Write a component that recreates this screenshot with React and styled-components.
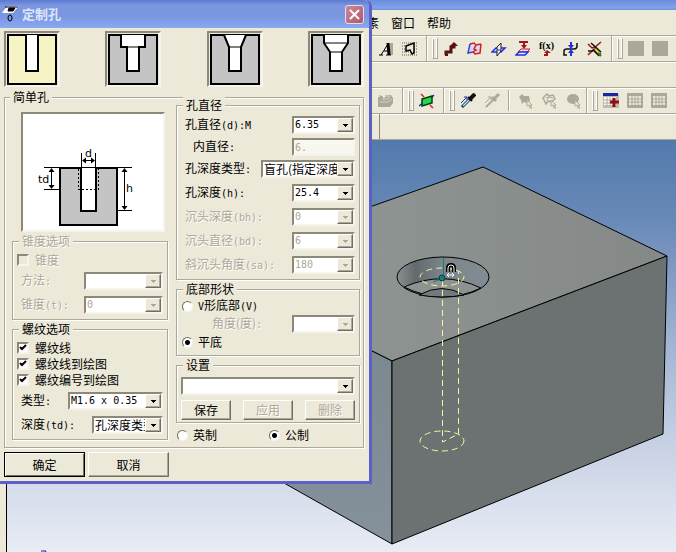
import React, { useState } from 'react'
import styled, { createGlobalStyle, css } from 'styled-components'

function Combo({ id, width, options, cjk, disabled, label }) {
    return (
        <ComboBox $width={width}>
            <select id={id} className={cjk ? 'cjk' : ''} disabled={disabled} aria-label={label}>
                {options.map((option) => <option key={option}>{option}</option>)}
            </select>
            <ComboArrow $disabled={disabled}>
                <svg width='5' height='3' viewBox='0 0 5 3' shapeRendering='crispEdges'>
                    <path d='M0 0h5v1h-1v1h-1v1h-1v-1h-1v-1h-1z' />
                </svg>
            </ComboArrow>
        </ComboBox>
    )
}

function Field({ id, text, latin, children, indent, disabled, height }) {
    return (
        <FieldRow $height={height}>
            <FieldLabel htmlFor={id} $indent={indent} $disabled={disabled}>
                {text}{latin && <span className='latin'>{latin}</span>}
            </FieldLabel>
            {children}
        </FieldRow>
    )
}

function Check({ text, checked, disabled }) {
    const [on, setOn] = useState(checked)
    return (
        <CheckLabel $disabled={disabled}>
            <input type='checkbox' checked={on} disabled={disabled} onChange={(e) => setOn(e.target.checked)} />
            {text}
        </CheckLabel>
    )
}

function Radio({ name, value, current, onPick, children }) {
    return (
        <RadioLabel>
            <input type='radio' name={name} checked={value === current} onChange={() => onPick(value)} />
            <span>{children}</span>
        </RadioLabel>
    )
}

// hole profiles, drawn in a 50 x 51 block
const holes = [
    { name: '简单孔', fill: '#f6f4c4', bore: 'M19 1V37H31V1' },
    { name: '沉头孔', fill: '#c4c4c4', bore: 'M13 1V13H19V37H31V13H37V1', line: 'M19 13H31' },
    { name: '斜沉头孔', fill: '#c4c4c4', bore: 'M14 1L19 13V37H31V13L36 1', line: 'M19 13H31' },
    { name: '复合孔', fill: '#c4c4c4', bore: 'M13 1V9L19 18V37H31V18L37 9V1', line: 'M13 9H37M19 18H31' },
]

function HoleIcon({ hole }) {
    return (
        <svg width='50' height='51' viewBox='0 0 50 51'>
            <rect x='1' y='1' width='48' height='49' fill={hole.fill} stroke='#000' strokeWidth='2' />
            <path d={hole.bore} fill='#fff' stroke='#000' strokeWidth='2' />
            {hole.line && <path d={hole.line} stroke='#000' />}
        </svg>
    )
}

function HoleDrawing() {
    return (
        <svg width='140' height='115' viewBox='23 114 140 115'>
            <path d='M60 168H117V225H60Z' fill='#c4c4c4' stroke='#000' strokeWidth='2' />
            <path d='M81 167V211H96V167' fill='#fff' stroke='#000' strokeWidth='2' />
            <g stroke='#000' fill='none' shapeRendering='crispEdges'>
                <path d='M44 167.500H132M81.500 153V168M95.500 153V168M44 189.500H60M118 210.500H132' />
                <path d='M83 160.500H94M51.500 169V188M124.500 169V209' />
                <path d='M78.500 169V189.500H98.500V169' strokeDasharray='2 2' />
            </g>
            <path d='M82 160.500l4-3v6zM95 160.500l-4-3v6zM51.500 168l-3 4h6zM51.500 189l-3-4h6zM124.500 168l-3 4h6zM124.500 210l-3-4h6z' />
            <text x='85' y='157'>d</text>
            <text x='38' y='183'>td</text>
            <text x='126' y='192'>h</text>
        </svg>
    )
}

const toolIcons = {
    text: (
        <>
            <path d='M12 2H15V14H12Z' fill='#aca899' />
            <path d='M1 14H5M8 14H13M3 14L10 3M6 10H10' stroke='#000' fill='none' />
            <path d='M10 2L11 14' stroke='#000' strokeWidth='3' />
        </>
    ),
    mesh: (
        <>
            <path d='M0 2H16M0 5H16M0 8H16M0 11H16M0 14H16' stroke='#8c8a80' strokeWidth='1.500' strokeDasharray='1 1' />
            <path d='M4 5L12 2V12L10 13L8 9L4 10Z' fill='#ece9d8' stroke='#000' strokeWidth='1.500' />
        </>
    ),
    bend: (
        <>
            <path d='M3 14V11H8V6H11V4' stroke='#581010' strokeWidth='3' fill='none' />
            <path d='M2 12V15H5V13Z' fill='#581010' />
            <path d='M7 5L11 1L15 5Z' fill='#581010' />
        </>
    ),
    surface: (
        <>
            <path d='M3 3L7 2L9 4L14 3L13 12L8 13L6 11L1 12Z' fill='#ded8ee' />
            <path d='M3 3L7 2L9 4L14 3M6 11L8 13L13 12L14 3M9 4L7 8L9 9L6 11' fill='none' stroke='#d02020' strokeWidth='1.500' />
            <path d='M3 3L1 12L6 11' stroke='#3048d0' strokeWidth='1.500' fill='none' />
        </>
    ),
    planes: (
        <>
            <path d='M1 11L5 7H14L10 11Z' fill='#e8ecff' stroke='#2030e0' strokeWidth='1.500' />
            <path d='M6 15V6L10 2V10Z' fill='#f4f2e8' stroke='#202020' />
            <path d='M6 9H10' stroke='#2030e0' />
        </>
    ),
    offset: (
        <>
            <path d='M4 1H13M9 1V5' stroke='#a01818' strokeWidth='2' />
            <path d='M9 8L6 4H12Z' fill='#a01818' />
            <path d='M3 11L6 8H15L12 11Z' fill='#f4dce0' stroke='#c02030' />
            <path d='M1 14L4 11H13L10 14Z' fill='#e8ecff' stroke='#2030e0' strokeWidth='1.500' />
        </>
    ),
    fx: (
        <>
            <path d='M5 14H8V10' stroke='#a01818' strokeWidth='2' fill='none' />
            <path d='M5 12L8 9L12 12Z' fill='#a01818' />
            <text x='0' y='8' fontSize='10' fontWeight='bold' fontFamily='Liberation Serif, serif'>f(x)</text>
        </>
    ),
    spline: (
        <>
            <path d='M4 14H1V10Q1 8 4 8H11Q14 8 14 5V2' stroke='#101010' strokeWidth='1.500' fill='none' />
            <path d='M8 1V4M8 12V15' stroke='#2030e0' strokeWidth='2' />
            <path d='M5 4H11L8 8ZM5 12H11L8 8Z' fill='#2030e0' />
        </>
    ),
    trim: (
        <>
            <path d='M1 3L5 7L8 6L14 1M1 14L7 8' stroke='#901818' strokeWidth='1.500' fill='none' />
            <path d='M4 2L14 11M1 10L6 10' stroke='#101010' strokeWidth='1.500' />
            <path d='M7 8L13 14' stroke='#101010' strokeWidth='4' />
            <path d='M8 8L13 13' stroke='#ecd838' strokeWidth='2' />
            <path d='M11 12L14 15' stroke='#207828' strokeWidth='2' />
        </>
    ),
    blank: <path d='M0 0h16v15h-16z' fill='#aca899' />,
    print: (
        <>
            <path d='M0 4H2L1 2L4 3L6 5L8 2H13L15 5V10L12 14H0Z' fill='#aca899' />
            <path d='M5 6L8 3H12L10 6ZM2 9H10L14 6' stroke='#d8d4c4' fill='none' />
        </>
    ),
    plane: (
        <>
            <path d='M2 1L5 4M11 12L14 15' stroke='#e02020' strokeWidth='1.500' />
            <path d='M15 2L12 5M0 13L4 10' stroke='#2030e0' strokeWidth='1.500' />
            <path d='M3 6L13 3V10L3 13Z' fill='#20d848' stroke='#083810' strokeWidth='1.500' />
        </>
    ),
    dropper: (
        <>
            <path d='M1 10L7 4M4 4H7V7' stroke='#2030b0' fill='none' />
            <path d='M2 14L10 6' stroke='#102858' strokeWidth='3' />
            <path d='M3 13L9 7' stroke='#a8ecf4' strokeWidth='1.500' />
            <path d='M8 4L12 8' stroke='#101010' strokeWidth='2' />
            <path d='M10 6L15 1' stroke='#101010' strokeWidth='4' />
        </>
    ),
    dropperOff: (
        <>
            <path d='M1 10L7 4M4 4H7V7' stroke='#aca899' fill='none' />
            <path d='M2 14L10 6' stroke='#aca899' strokeWidth='2' />
            <path d='M8 4L12 8M10 6L15 1' stroke='#aca899' strokeWidth='3' />
        </>
    ),
    shapeOff: (
        <>
            <path d='M1 4L4 1L6 3L11 3L12 8L8 10L6 9L4 11L3 7Z' fill='#aca899' />
            <path d='M9 7L14 12H12L14 15L12 15L11 12L9 13Z' fill='#ece9d8' stroke='#aca899' />
        </>
    ),
    edgeOff: (
        <>
            <path d='M1 5L5 1L7 3L11 2L13 6L9 9L6 8L4 11Z' fill='none' stroke='#aca899' strokeWidth='1.500' />
            <path d='M4 5L7 4L11 5M5 7L7 4' fill='none' stroke='#aca899' />
            <path d='M9 7L14 12H12L14 15L12 15L11 12L9 13Z' fill='#ece9d8' stroke='#aca899' />
        </>
    ),
    roundOff: (
        <>
            <ellipse cx='7' cy='6' rx='6' ry='5' fill='#aca899' />
            <path d='M9 7L14 12H12L14 15L12 15L11 12L9 13Z' fill='#ece9d8' stroke='#aca899' />
        </>
    ),
    tableAdd: (
        <>
            <path d='M0 1H16V15H0Z' fill='#c0bcac' />
            <path d='M1 4H13V12H1Z' fill='#fff' />
            <path d='M4 4V12M7 4V12M10 4V12M1 7H13M1 10H13' stroke='#aca899' />
            <path d='M0 0H15V3H0Z' fill='#1828a0' />
            <path d='M11 5V14M7 9H16' stroke='#901018' strokeWidth='3' />
        </>
    ),
    tableOff: (
        <>
            <path d='M0 0H16V15H0Z' fill='#aca899' />
            <path d='M2 3H14V12H2Z' fill='#ece9d8' />
            <path d='M5 3V12M8 3V12M11 3V12M2 6H14M2 9H14' stroke='#aca899' />
        </>
    ),
}

function Tool({ icon, label, disabled }) {
    return (
        <ToolButton type='button' aria-label={label} disabled={disabled}>
            <svg width='16' height='16' viewBox='0 0 16 16'>{toolIcons[icon]}</svg>
        </ToolButton>
    )
}

function Scene() {
    return (
        <SceneSvg viewBox='7 140 669 412' preserveAspectRatio='xMinYMin slice'>
            <defs>
                <linearGradient id='top' x1='0' y1='0' x2='1' y2='0'>
                    <stop offset='0' stopColor='#959b98' />
                    <stop offset='1' stopColor='#848988' />
                </linearGradient>
                <linearGradient id='side' x1='0' y1='0' x2='0' y2='1'>
                    <stop offset='0' stopColor='#78848a' />
                    <stop offset='1' stopColor='#85919b' />
                </linearGradient>
                <linearGradient id='bore' x1='0' y1='0' x2='1' y2='0'>
                    <stop offset='0' stopColor='#8a908e' />
                    <stop offset='.2' stopColor='#626a6e' />
                    <stop offset='.5' stopColor='#7c858b' />
                    <stop offset='1' stopColor='#828c94' />
                </linearGradient>
            </defs>
            <g stroke='#000' strokeLinejoin='round'>
                <path d='M483 167L667 256L392 361L160 245V281Z' fill='url(#top)' />
                <path d='M392 361L160 245V413L392 544Z' fill='url(#side)' />
                <path d='M392 361L667 256L663 434L392 544Z' fill='#6b7271' />
                <ellipse cx='443' cy='277' rx='46' ry='20' fill='url(#bore)' />
                <path d='M404 287Q443 270 481 288Q443 306 404 287Z' fill='#8d9391' />
                <path d='M419 295Q442 282 464 295Q442 299 419 295Z' fill='#727a7e' />
            </g>
            <g stroke='#f5f5a0' fill='none' strokeDasharray='6 4'>
                <ellipse cx='442' cy='277' rx='22' ry='9' />
                <ellipse cx='442' cy='441' rx='22' ry='10' />
                <path d='M442.500 280V442L458.500 434V271' />
            </g>
            <path d='M443.500 258V278L433 282' stroke='#108078' fill='none' />
            <circle cx='442' cy='278' r='3' fill='#108078' stroke='#083c38' />
            <path d='M448 272V268Q448 265 451 265Q454 265 454 268V272' stroke='#000' strokeWidth='4' fill='none' />
            <path d='M448 272V268Q448 265 451 265Q454 265 454 268V272M447 275H454M449 273L447 275L449 277M452 273L454 275L452 277' stroke='#fff' fill='none' />
            <path d='M41 551H46L43 556' stroke='#1820c0' fill='none' />
        </SceneSvg>
    )
}

function HoleDialog() {
    const [hole, setHole] = useState('简单孔')
    const [bottom, setBottom] = useState('flat')
    const [unit, setUnit] = useState('metric')

    return (
        <DialogWindow role='dialog' aria-label='定制孔'>
            <DialogTitle>
                <svg width='17' height='18' viewBox='0 0 17 18'>
                    <path d='M0 8L5 1H17L11 8Z' fill='#fff' />
                    <path d='M3 2H16M7 3H13L11 6H6Z' fill='#000' stroke='#000' />
                    <ellipse cx='8' cy='13' rx='2' ry='3' fill='none' stroke='#000' />
                </svg>
                <h1>定制孔</h1>
                <CloseButton type='button' aria-label='关闭'>
                    <svg width='11' height='11' viewBox='0 0 11 11'>
                        <path d='M1 1L10 10M10 1L1 10' stroke='#fff' strokeWidth='2' />
                    </svg>
                </CloseButton>
            </DialogTitle>

            <DialogBody>
                <HoleTypes>
                    {holes.map((item) => (
                        <HoleButton
                            key={item.name}
                            type='button'
                            aria-label={item.name}
                            aria-pressed={item.name === hole}
                            onClick={() => setHole(item.name)}
                        >
                            <HoleIcon hole={item} />
                        </HoleButton>
                    ))}
                </HoleTypes>

                <MainGroup>
                    <legend>简单孔</legend>
                    <Columns>
                        <LeftColumn>
                            <Preview><HoleDrawing /></Preview>
                            <Group $disabled $top={3} $bottom={2}>
                                <legend>锥度选项</legend>
                                <Check text='锥度' checked={false} disabled />
                                <FieldList>
                                    <Field id='method' text='方法' latin=':' disabled>
                                        <Combo id='method' width={79} options={['']} disabled />
                                    </Field>
                                    <Field id='taper' text='锥度' latin='(t):' disabled>
                                        <Combo id='taper' width={79} options={['0']} disabled />
                                    </Field>
                                </FieldList>
                            </Group>
                            <Group $top={3} $bottom={2}>
                                <legend>螺纹选项</legend>
                                <Check text='螺纹线' checked />
                                <Check text='螺纹线到绘图' checked />
                                <Check text='螺纹编号到绘图' checked />
                                <FieldList>
                                    <Field id='thread' text='类型' latin=':'>
                                        <Combo id='thread' width={95} options={['M1.6 x 0.35']} />
                                    </Field>
                                    <Field id='threadDepth' text='深度' latin='(td):'>
                                        <Combo id='threadDepth' width={71} options={['孔深度类型']} cjk />
                                    </Field>
                                </FieldList>
                            </Group>
                        </LeftColumn>

                        <RightColumn>
                            <Group $bottom={2}>
                                <legend>孔直径</legend>
                                <Field id='diameter' text='孔直径' latin='(d):M'>
                                    <Combo id='diameter' width={63} options={['6.35']} />
                                </Field>
                                <Field id='inner' text='内直径' latin=':' indent height={20}>
                                    <TextBox id='inner' defaultValue='6.' disabled />
                                </Field>
                                <Field id='depthType' text='孔深度类型' latin=':'>
                                    <Combo id='depthType' width={94} options={['盲孔(指定深度)']} cjk />
                                </Field>
                                <Field id='depth' text='孔深度' latin='(h):'>
                                    <Combo id='depth' width={63} options={['25.4']} />
                                </Field>
                                <Field id='boreDepth' text='沉头深度' latin='(bh):' disabled>
                                    <Combo id='boreDepth' width={63} options={['0']} disabled />
                                </Field>
                                <Field id='boreDiameter' text='沉头直径' latin='(bd):' disabled>
                                    <Combo id='boreDiameter' width={63} options={['6']} disabled />
                                </Field>
                                <Field id='sinkAngle' text='斜沉头角度' latin='(sa):' disabled>
                                    <Combo id='sinkAngle' width={63} options={['180']} disabled />
                                </Field>
                            </Group>

                            <Group $bottom={4}>
                                <legend>底部形状</legend>
                                <Radio name='bottom' value='v' current={bottom} onPick={setBottom}>
                                    <span className='latin'>V</span>形底部<span className='latin'>(V)</span>
                                </Radio>
                                <Field id='angle' text='角度(度)' latin=':' indent='deep' height={18} disabled>
                                    <Combo id='angle' width={63} options={['']} disabled />
                                </Field>
                                <Radio name='bottom' value='flat' current={bottom} onPick={setBottom}>平底</Radio>
                            </Group>

                            <Group $top={4} $bottom={2}>
                                <legend>设置</legend>
                                <Combo label='设置' options={['']} />
                                <SettingButtons>
                                    <PushButton type='button'>保存</PushButton>
                                    <PushButton type='button' disabled>应用</PushButton>
                                    <PushButton type='button' disabled>删除</PushButton>
                                </SettingButtons>
                            </Group>

                            <Units>
                                <Radio name='unit' value='inch' current={unit} onPick={setUnit}>英制</Radio>
                                <Radio name='unit' value='metric' current={unit} onPick={setUnit}>公制</Radio>
                            </Units>
                        </RightColumn>
                    </Columns>
                </MainGroup>

                <DialogButtons>
                    <PushButton type='submit' $large $primary>确定</PushButton>
                    <PushButton type='button' $large>取消</PushButton>
                </DialogButtons>
            </DialogBody>
        </DialogWindow>
    )
}

function App() {
    return (
        <Page>
            <GlobalStyle />
            <WindowTitle />
            <MenuBar>
                <a href='#elements'>素</a>
                <a href='#window'>窗口</a>
                <a href='#help'>帮助</a>
            </MenuBar>
            <Toolbar>
                <Band>
                    <Tool icon='text' label='文字' />
                    <Tool icon='mesh' label='网格' />
                </Band>
                <Band>
                    <Grip />
                    <Tool icon='bend' label='折弯' />
                    <Tool icon='surface' label='曲面' />
                    <Tool icon='planes' label='基准面' />
                    <Tool icon='offset' label='偏移' />
                    <Tool icon='fx' label='公式' />
                    <Tool icon='spline' label='样条' />
                    <Tool icon='trim' label='裁剪' />
                </Band>
                <Band $last>
                    <Grip />
                    <Tool icon='blank' label='空白一' disabled />
                    <Tool icon='blank' label='空白二' disabled />
                </Band>
            </Toolbar>
            <ToolbarGap />
            <Toolbar>
                <Band>
                    <Tool icon='print' label='渲染' disabled />
                </Band>
                <Band>
                    <Grip />
                    <Tool icon='plane' label='平面' />
                </Band>
                <Band $tight>
                    <Grip />
                    <Tool icon='dropper' label='拾取' />
                    <Tool icon='dropperOff' label='应用' disabled />
                    <Separator />
                    <Tool icon='shapeOff' label='选面' disabled />
                    <Tool icon='edgeOff' label='选边' disabled />
                    <Tool icon='roundOff' label='选体' disabled />
                </Band>
                <Band $last>
                    <Grip />
                    <Tool icon='tableAdd' label='添加表格' />
                    <Tool icon='tableOff' label='表格一' disabled />
                    <Tool icon='tableOff' label='表格二' disabled />
                </Band>
            </Toolbar>
            <TabStrip><div /></TabStrip>
            <Viewport><Scene /></Viewport>
            <HoleDialog />
        </Page>
    )
}

export default App

const face = '#ece9d8'
const shadow = '#aca899'

const sunken = css`
    border: 2px solid;
    border-color: #8c897b #f6f4ec #f6f4ec #8c897b;
`

const raised = css`
    border: 1px solid;
    border-color: #fff #716f64 #716f64 #fff;
    box-shadow: inset -1px -1px 0 ${shadow};
`

const dimmed = css`
    color: ${shadow};
    text-shadow: 1px 1px 0 #fff;
`

const GlobalStyle = createGlobalStyle`
    *{
        box-sizing: border-box;
    }
    body{
        margin: 0;
        color: #000;
        background: ${face};
        font: 12px/16px "Noto Sans CJK SC", sans-serif;
    }
    .latin{
        font-family: "DejaVu Sans Mono", monospace;
        font-size: 10px;
    }
    button, input, select{
        margin: 0;
        padding: 0;
        font: inherit;
        color: inherit;
    }
    svg{
        display: block;
    }
`

const Page = styled.div`
    position: relative;
    display: flex;
    flex-direction: column;
    min-height: 100vh;
    overflow: hidden;
`

const WindowTitle = styled.div`
    height: 10px;
    background: linear-gradient(#6c8ddd, #81a2ec 80%, #6f8fd8);
`

const MenuBar = styled.nav`
    display: flex;
    align-items: center;
    gap: 12px;
    height: 25px;
    padding-left: 367px;
    a{
        color: #000;
        text-decoration: none;
    }
`

const Toolbar = styled.div`
    display: flex;
    height: 27px;
    padding-left: 374px;
    border-top: 1px solid ${shadow};
    border-bottom: 1px solid ${shadow};
    box-shadow: inset 0 1px 0 #fff, 0 1px 0 #fff;
`

const ToolbarGap = styled.div`
    height: 25px;
`

const Band = styled.div`
    display: flex;
    align-items: center;
    padding-right: ${(props) => (props.$tight ? 0 : 4)}px;
    border-right: ${(props) => (props.$last ? 'none' : `1px solid ${shadow}`)};
    box-shadow: ${(props) => (props.$last ? 'none' : '1px 0 0 #fff')};
    margin-right: 1px;
`

const Grip = styled.span`
    width: 6px;
    height: 21px;
    margin: 0 1px 0 4px;
    border: 1px solid;
    border-color: #fff ${shadow} ${shadow} #fff;
    box-shadow: inset -1px 0 0 #fff, inset 1px 0 0 ${shadow};
`

const Separator = styled.span`
    width: 2px;
    height: 21px;
    margin: 0 4px;
    border-left: 1px solid ${shadow};
    border-right: 1px solid #fff;
`

const ToolButton = styled.button`
    display: grid;
    place-items: center;
    width: 24px;
    height: 24px;
    border: none;
    background: none;
`

const TabStrip = styled.div`
    height: 26px;
    padding-left: 379px;
    border-bottom: 1px solid ${shadow};
    div{
        height: 100%;
        border-left: 1px solid #8c897b;
    }
`

const Viewport = styled.main`
    flex: 1;
    min-height: 412px;
    margin-left: 6px;
    border-left: 1px solid #000;
    background: linear-gradient(#517aab, #6a8ab8 20%, #a3b5d3 50%, #cdd6e7 78%, #e8ecf5);
`

const SceneSvg = styled.svg`
    width: 100%;
    height: 412px;
`

const DialogWindow = styled.form`
    position: absolute;
    top: 0;
    left: 0;
    width: 372px;
    border: solid #5b60c8;
    border-width: 0 3px 3px 0;
    border-radius: 0 7px 0 0;
    background: ${face};
`

const DialogTitle = styled.header`
    display: flex;
    align-items: center;
    gap: 3px;
    height: 28px;
    padding: 0 5px 0 2px;
    border-radius: 0 5px 0 0;
    background: linear-gradient(#5a7bd3, #7c96df 20%, #7b97e2 60%, #8aa9f0);
    h1{
        flex: 1;
        margin: 0;
        color: #dbe5fb;
        font-size: 13px;
        font-weight: bold;
    }
`

const CloseButton = styled.button`
    display: grid;
    place-items: center;
    width: 19px;
    height: 19px;
    border: 1px solid #e6dcf0;
    border-radius: 3px;
    background: linear-gradient(135deg, #c98a9c, #b0586a);
`

const DialogBody = styled.div`
    padding: 3px 5px 4px 4px;
`

const HoleTypes = styled.div`
    display: flex;
    justify-content: space-between;
    margin-bottom: 2px;
`

const HoleButton = styled.button`
    display: grid;
    place-items: center;
    width: 56px;
    height: 56px;
    background: ${face};
    ${sunken}
`

const Group = styled.fieldset`
    min-width: 0;
    margin: 0;
    padding: ${(props) => props.$top || 0}px 4px ${(props) => props.$bottom}px;
    border: 1px solid ${shadow};
    box-shadow: 1px 1px 0 #fff, inset 1px 1px 0 #fff;
    legend{
        margin-left: 2px;
        padding: 0 3px;
        line-height: 16px;
        background: ${face};
        ${(props) => props.$disabled && dimmed}
    }
`

const MainGroup = styled(Group)`
    padding: 0 3px 1px 7px;
    > legend{
        margin-left: -2px;
    }
`

// the columns start level with the frame line, beside the legend
const Columns = styled.div`
    display: grid;
    grid-template-columns: 156fr 184fr;
    gap: 8px;
    margin-top: -8px;
`

const LeftColumn = styled.div`
    display: flex;
    flex-direction: column;
    gap: 1px;
    padding-top: 15px;
`

const RightColumn = styled.div`
    display: flex;
    flex-direction: column;
    gap: 1px;
`

const Preview = styled.div`
    height: 120px;
    margin: 0 3px 0 9px;
    background: #fff;
    ${sunken}
    text{
        font: 11px "DejaVu Sans", sans-serif;
    }
`

const FieldList = styled.div`
    padding-top: 1px;
`

const FieldRow = styled.div`
    display: flex;
    align-items: center;
    justify-content: space-between;
    height: ${(props) => props.$height || 24}px;
`

const FieldLabel = styled.label`
    flex: none;
    padding-left: ${(props) => (props.$indent === 'deep' ? 31 : props.$indent ? 12 : 4)}px;
    white-space: nowrap;
    ${(props) => props.$disabled && dimmed}
`

const ComboBox = styled.span`
    display: flex;
    width: ${(props) => (props.$width ? `${props.$width}px` : '100%')};
    height: 18px;
    background: #fff;
    ${sunken}
    select{
        flex: 1;
        min-width: 0;
        height: 14px;
        padding-left: 1px;
        border: none;
        outline: none;
        appearance: none;
        background: #fff;
        font: 10px/14px "DejaVu Sans Mono", monospace;
        overflow: hidden;
        opacity: 1;
    }
    select.cjk{
        font: 12px/14px "Noto Sans CJK SC", sans-serif;
    }
    select:disabled{
        color: ${shadow};
    }
`

const ComboArrow = styled.span`
    display: grid;
    place-items: center;
    flex: none;
    width: 16px;
    height: 14px;
    background: ${face};
    pointer-events: none;
    ${raised}
    svg{
        fill: ${(props) => (props.$disabled ? shadow : '#000')};
    }
`

const TextBox = styled.input`
    width: 63px;
    height: 18px;
    padding-left: 1px;
    font: 10px/14px "DejaVu Sans Mono", monospace;
    ${sunken}
    &:disabled{
        color: ${shadow};
        background: #f8f7f0;
    }
`

const CheckLabel = styled.label`
    display: flex;
    align-items: center;
    gap: 6px;
    height: 16px;
    ${(props) => props.$disabled && dimmed}
    input{
        appearance: none;
        width: 12px;
        height: 12px;
        background: #fff;
        ${sunken}
    }
    input:disabled{
        background: ${face};
    }
    input:checked{
        background: #fff url("data:image/svg+xml,%3Csvg xmlns='http://www.w3.org/2000/svg' width='8' height='8'%3E%3Cpath d='M1 3L3 5L7 1' fill='none' stroke='black' stroke-width='2'/%3E%3C/svg%3E") center no-repeat;
    }
`

const RadioLabel = styled.label`
    display: flex;
    align-items: center;
    gap: 5px;
    height: 18px;
    padding-left: 1px;
    input{
        appearance: none;
        width: 11px;
        height: 11px;
        border-radius: 50%;
        background: #fff;
        border: 1px solid;
        border-color: #716f64 #f6f4ec #f6f4ec #716f64;
    }
    input:checked{
        background: radial-gradient(circle, #000 2px, #fff 3px);
    }
`

const Units = styled.div`
    display: grid;
    grid-template-columns: 1fr 1fr;
    align-items: center;
    height: 22px;
`

const PushButton = styled.button`
    width: ${(props) => (props.$large ? 81 : 50)}px;
    height: ${(props) => (props.$large ? 25 : 20)}px;
    background: ${face};
    ${raised}
    ${(props) => props.$primary && css`
        border-color: #000;
        box-shadow: inset 1px 1px 0 #fff, inset -1px -1px 0 #716f64;
    `}
    &:disabled{
        ${dimmed}
    }
`

const SettingButtons = styled.div`
    display: flex;
    justify-content: space-between;
    margin-top: 5px;
`

const DialogButtons = styled.div`
    display: flex;
    gap: 3px;
    padding-top: 4px;
`
